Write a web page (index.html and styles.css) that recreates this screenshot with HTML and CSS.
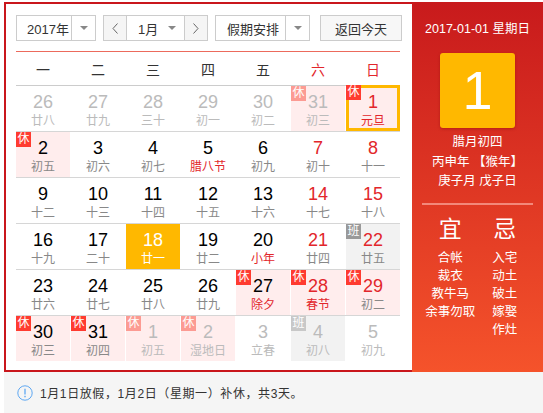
FILE: index.html
```html
<!DOCTYPE html>
<html lang="zh-CN">
<head>
<meta charset="utf-8">
<title>万年历</title>
<link rel="stylesheet" href="styles.css">
</head>
<body>
<div class="widget">
  <div class="main">
    <div class="toolbar">
      <div class="box year">
        <span class="label">2017年</span>
        <span class="drop"><i class="tri"></i></span>
      </div>
      <div class="box month">
        <span class="nav"><svg width="6" height="11" viewBox="0 0 6 11"><path d="M5.5 0.5 L1 5.5 L5.5 10.5" fill="none" stroke="#666" stroke-width="1"/></svg></span>
        <span class="mid"><span class="label">1月</span><i class="tri"></i></span>
        <span class="nav"><svg width="6" height="11" viewBox="0 0 6 11"><path d="M0.5 0.5 L5 5.5 L0.5 10.5" fill="none" stroke="#666" stroke-width="1"/></svg></span>
      </div>
      <div class="box holiday">
        <span class="label">假期安排</span>
        <span class="drop"><i class="tri"></i></span>
      </div>
      <div class="box today-btn">返回今天</div>
    </div>

    <div class="weekhead">
      <span>一</span><span>二</span><span>三</span><span>四</span><span>五</span><span class="red">六</span><span class="red">日</span>
    </div>

    <div class="week">
      <div class="cell other"><b>26</b><em>廿八</em></div>
      <div class="cell other"><b>27</b><em>廿九</em></div>
      <div class="cell other"><b>28</b><em>三十</em></div>
      <div class="cell other"><b>29</b><em>初一</em></div>
      <div class="cell other"><b>30</b><em>初二</em></div>
      <div class="cell other hol"><i class="tag rest">休</i><b>31</b><em>初三</em></div>
      <div class="cell wk hol today"><i class="tag rest">休</i><b>1</b><em class="fest">元旦</em></div>
    </div>
    <div class="week">
      <div class="cell hol"><i class="tag rest">休</i><b>2</b><em>初五</em></div>
      <div class="cell"><b>3</b><em>初六</em></div>
      <div class="cell"><b>4</b><em>初七</em></div>
      <div class="cell"><b>5</b><em class="fest">腊八节</em></div>
      <div class="cell"><b>6</b><em>初九</em></div>
      <div class="cell wk"><b>7</b><em>初十</em></div>
      <div class="cell wk"><b>8</b><em>十一</em></div>
    </div>
    <div class="week">
      <div class="cell"><b>9</b><em>十二</em></div>
      <div class="cell"><b>10</b><em>十三</em></div>
      <div class="cell"><b>11</b><em>十四</em></div>
      <div class="cell"><b>12</b><em>十五</em></div>
      <div class="cell"><b>13</b><em>十六</em></div>
      <div class="cell wk"><b>14</b><em>十七</em></div>
      <div class="cell wk"><b>15</b><em>十八</em></div>
    </div>
    <div class="week">
      <div class="cell"><b>16</b><em>十九</em></div>
      <div class="cell"><b>17</b><em>二十</em></div>
      <div class="cell selected"><b>18</b><em>廿一</em></div>
      <div class="cell"><b>19</b><em>廿二</em></div>
      <div class="cell"><b>20</b><em class="fest">小年</em></div>
      <div class="cell wk"><b>21</b><em>廿四</em></div>
      <div class="cell wk work"><i class="tag shift">班</i><b>22</b><em>廿五</em></div>
    </div>
    <div class="week">
      <div class="cell"><b>23</b><em>廿六</em></div>
      <div class="cell"><b>24</b><em>廿七</em></div>
      <div class="cell"><b>25</b><em>廿八</em></div>
      <div class="cell"><b>26</b><em>廿九</em></div>
      <div class="cell hol"><i class="tag rest">休</i><b>27</b><em class="fest">除夕</em></div>
      <div class="cell wk hol"><i class="tag rest">休</i><b>28</b><em class="fest">春节</em></div>
      <div class="cell wk hol"><i class="tag rest">休</i><b>29</b><em>初二</em></div>
    </div>
    <div class="week last">
      <div class="cell hol"><i class="tag rest">休</i><b>30</b><em>初三</em></div>
      <div class="cell hol"><i class="tag rest">休</i><b>31</b><em>初四</em></div>
      <div class="cell other hol"><i class="tag rest">休</i><b>1</b><em>初五</em></div>
      <div class="cell other hol"><i class="tag rest">休</i><b>2</b><em>湿地日</em></div>
      <div class="cell other"><b>3</b><em>立春</em></div>
      <div class="cell other work"><i class="tag shift">班</i><b>4</b><em>初八</em></div>
      <div class="cell other"><b>5</b><em>初九</em></div>
    </div>
  </div>

  <div class="side">
    <div class="date">2017-01-01 星期日</div>
    <div class="bigday">1</div>
    <div class="lunar">
      <div>腊月初四</div>
      <div>丙申年 【猴年】</div>
      <div>庚子月 戊子日</div>
    </div>
    <div class="divider"></div>
    <div class="yiji">
      <div class="col">
        <div class="head">宜</div>
        <div>合帐</div>
        <div>裁衣</div>
        <div>教牛马</div>
        <div>余事勿取</div>
      </div>
      <div class="col">
        <div class="head">忌</div>
        <div>入宅</div>
        <div>动土</div>
        <div>破土</div>
        <div>嫁娶</div>
        <div>作灶</div>
      </div>
    </div>
  </div>
</div>
<div class="notice">
  <svg class="info" width="16" height="16" viewBox="0 0 16 16"><circle cx="8" cy="8" r="7.2" fill="none" stroke="#5fa8f2" stroke-width="1"/><line x1="8" y1="3.8" x2="8" y2="9.6" stroke="#5fa8f2" stroke-width="1.3"/><rect x="7.3" y="10.8" width="1.4" height="1.5" fill="#5fa8f2"/></svg>
  <span>1月1日放假，1月2日（星期一）补休，共3天。</span>
</div>
</body>
</html>
```

FILE: styles.css
```css
* { box-sizing: border-box; }
html, body { margin: 0; padding: 0; background: #fff; }
body {
  font-family: "Liberation Sans", "Noto Sans CJK SC", sans-serif;
  color: #333;
  width: 543px;
  overflow: hidden;
}
.widget {
  display: flex;
  margin: 2px 0 0 4px;
  height: 370px;
}
.main {
  width: 408px;
  border: 2px solid #c9161c;
  border-right: none;
  padding: 11px 0 0 10px;
  background: #fff;
}
.toolbar {
  display: flex;
  height: 26px;
  width: 386px;
}
.box {
  display: flex;
  align-items: center;
  height: 26px;
  border: 1px solid #ccc;
  font-size: 13px;
  color: #333;
  background: #fff;
}
.box .label { flex: 1; padding-left: 10px; white-space: nowrap; }
.drop {
  width: 24px;
  height: 100%;
  border-left: 1px solid #ccc;
  display: flex;
  align-items: center;
  justify-content: center;
}
.tri {
  display: block;
  width: 0; height: 0;
  border-left: 4px solid transparent;
  border-right: 4px solid transparent;
  border-top: 4px solid #888;
}
.year { width: 80px; }
.month { width: 105px; margin-left: 7px; }
.month .nav {
  width: 22px; height: 100%;
  background: #f5f5f5;
  display: flex; align-items: center; justify-content: center;
}
.month .mid {
  flex: 1; height: 100%;
  display: flex; align-items: center;
  border-left: 1px solid #ccc;
  border-right: 1px solid #ccc;
  padding-right: 8px;
}
.month .mid .label { padding-left: 11px; }
.holiday { width: 95px; margin-left: 7px; }
.holiday .label { padding-left: 11px; }
.today-btn {
  width: 82px;
  margin-left: 10px;
  justify-content: center;
  background: #f7f7f7;
}
.weekhead {
  margin-top: 10px;
  width: 384px;
  height: 35px;
  border-top: 1px solid #ec6a5c;
  border-bottom: 1px solid #ccc;
  display: grid;
  grid-template-columns: repeat(7, 54px);
  column-gap: 1px;
  align-items: center;
  text-align: center;
  font-size: 14px;
  color: #333;
}
.weekhead .red { color: #e2262b; }
.week {
  width: 384px;
  height: 46px;
  border-bottom: 1px solid #d6d6d6;
  display: grid;
  grid-template-columns: repeat(7, 54px);
  column-gap: 1px;
}
.week.last { border-bottom: none; }
.cell {
  position: relative;
  height: 45px;
  padding-top: 6px;
  text-align: center;
}
.cell b {
  display: block;
  font-weight: normal;
  font-size: 18px;
  line-height: 20px;
  color: #000;
}
.cell em {
  display: block;
  font-style: normal;
  font-size: 12px;
  line-height: 18px;
  color: #888;
  white-space: nowrap;
}
.cell.wk b { color: #e2262b; }
.cell em.fest { color: #e2262b; }
.cell.other b { color: #bbb; }
.cell.other em { color: #bbb; }
.cell.hol { background: #ffeded; }
.cell.work { background: #f2f2f2; }
.cell.today {
  border: 3px solid #ffb800;
  padding-top: 3px;
  height: 46px;
  margin-top: -1px;
}
.cell.today .tag { top: -3px; left: -3px; }
.cell.today b { margin-top: 1px; }
.cell.selected { background: #ffb800; }
.cell.selected b, .cell.selected em { color: #fff; }
.tag {
  position: absolute;
  top: 0; left: 0;
  width: 15px; height: 15px;
  font-style: normal;
  font-size: 12px;
  line-height: 15px;
  text-align: center;
  color: #fff;
}
.tag.rest { background: #ff3b30; }
.tag.shift { background: #999; }
.cell.other .tag.rest { background: #fc9b93; }
.cell.other .tag.shift { background: #c8c8c8; }

.side {
  width: 131px;
  height: 370px;
  background: linear-gradient(#c81a1c, #f5532b);
  color: #fff;
  text-align: center;
  padding-top: 18px;
}
.date { font-size: 12.5px; line-height: 18px; white-space: nowrap; }
.bigday {
  width: 75px; height: 75px;
  margin: 15px auto 0;
  background: #ffb800;
  border-radius: 3px;
  box-shadow: 0 1px 3px rgba(120, 0, 0, 0.35);
  font-size: 54px;
  line-height: 75px;
  color: #fff;
}
.lunar {
  margin-top: 5px;
  font-size: 12.5px;
  line-height: 19.5px;
  white-space: nowrap;
}
.divider {
  margin: 11px 10px 0;
  height: 2px;
  background: rgba(255, 190, 180, 0.6);
}
.yiji {
  display: flex;
  padding: 9px 11px 0;
}
.yiji .col {
  width: 55px;
  font-size: 12.5px;
  line-height: 18px;
  white-space: nowrap;
}
.yiji .head {
  font-size: 23px;
  line-height: 30px;
  margin-bottom: 5px;
}
.notice {
  margin-left: 4px;
  height: 41px;
  background: #f5f5f5;
  display: flex;
  align-items: center;
  padding-left: 13px;
  font-size: 12px;
  color: #333;
}
.notice .info { margin-right: 7px; flex: none; }
.notice span { letter-spacing: 0.6px; }
```
